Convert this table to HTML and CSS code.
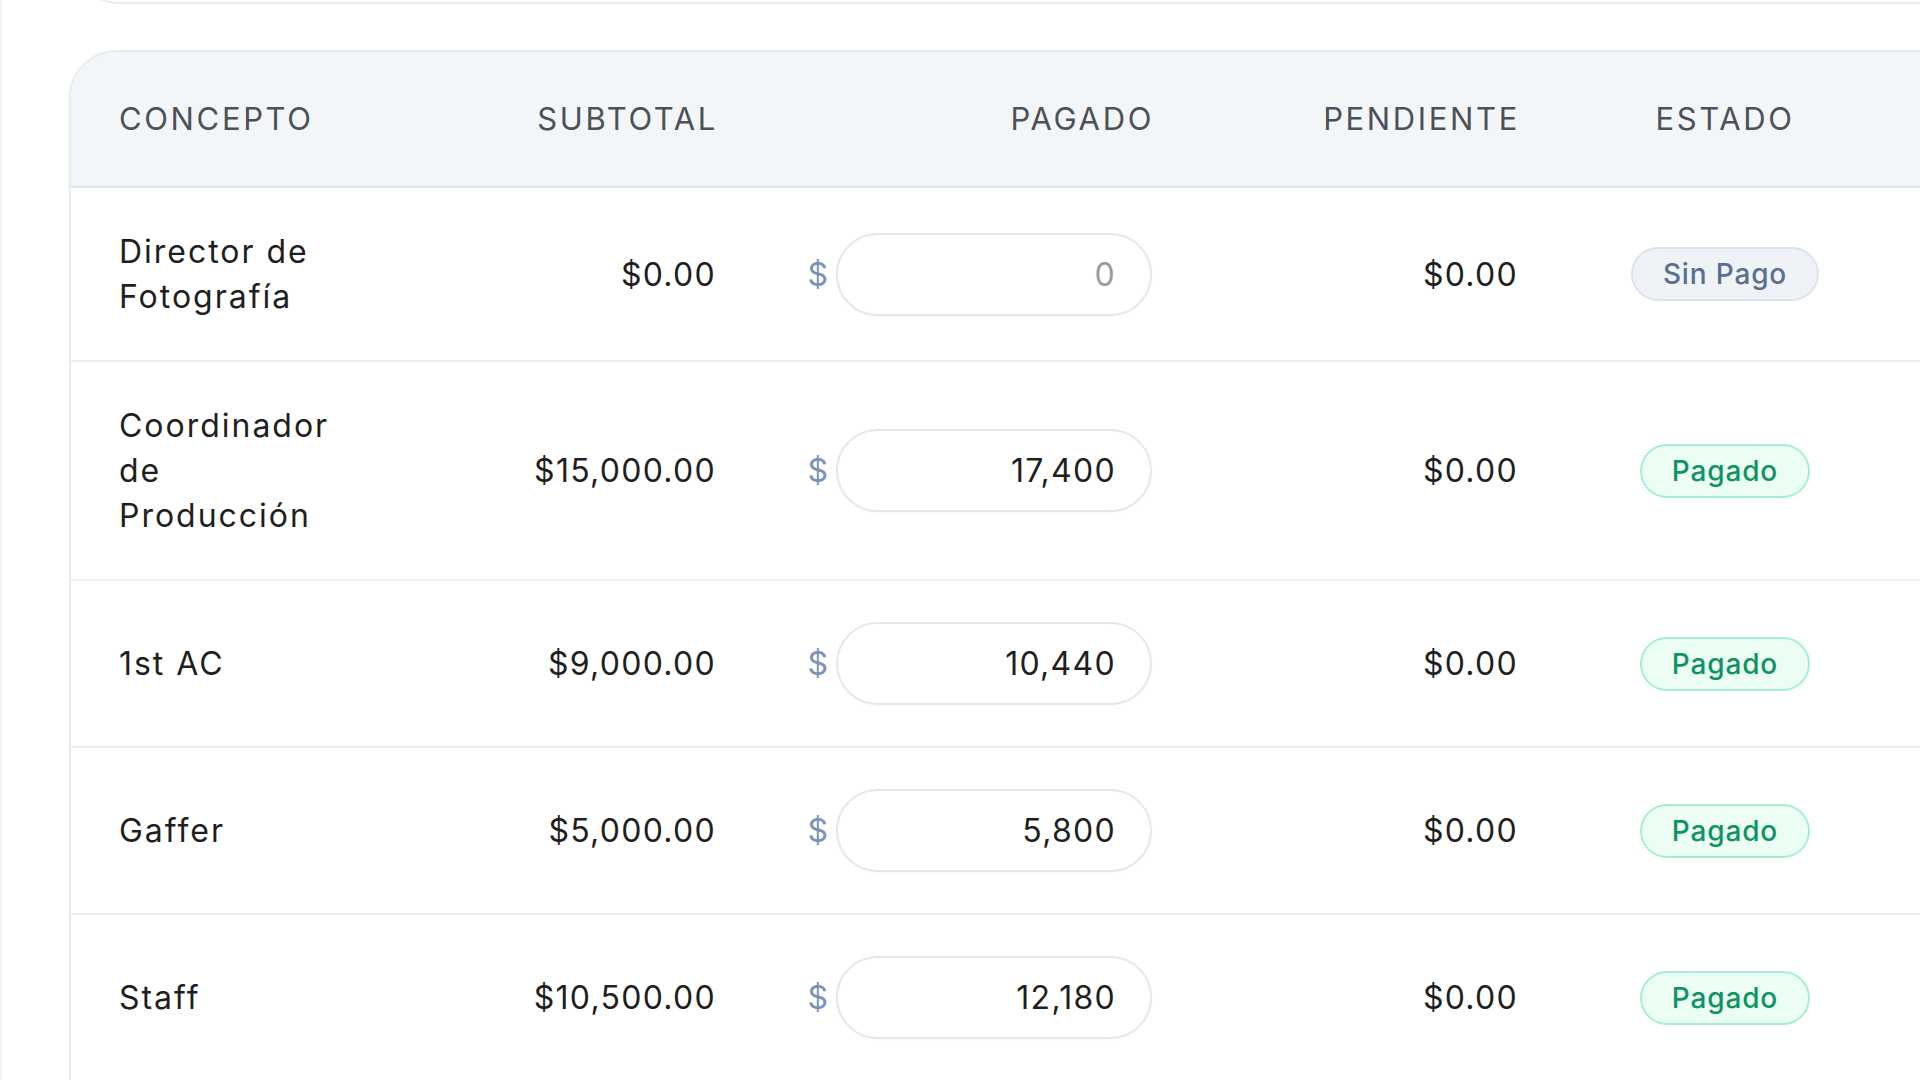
FILE: index.html
```html
<!DOCTYPE html>
<html lang="es">
<head>
<meta charset="utf-8">
<title>Pagos</title>
<link rel="stylesheet" href="styles.css">
</head>
<body>
<div class="page">
  <div class="prev-card"></div>
  <div class="table-card">
    <table class="pay-table">
      <colgroup>
        <col class="c-concept">
        <col class="c-subtotal">
        <col class="c-paid">
        <col class="c-pending">
        <col class="c-status">
        <col class="c-extra">
      </colgroup>
      <thead>
        <tr>
          <th class="left">Concepto</th>
          <th class="right">Subtotal</th>
          <th class="right">Pagado</th>
          <th class="right">Pendiente</th>
          <th class="center">Estado</th>
          <th></th>
        </tr>
      </thead>
      <tbody>
        <tr>
          <td class="left concept">Director de Fotografía</td>
          <td class="right num">$0.00</td>
          <td class="right"><div class="paid"><span class="cur">$</span><input class="amount zero" type="text" value="0"></div></td>
          <td class="right num">$0.00</td>
          <td class="center"><span class="badge badge-none">Sin Pago</span></td>
          <td></td>
        </tr>
        <tr>
          <td class="left concept">Coordinador de Producción</td>
          <td class="right num">$15,000.00</td>
          <td class="right"><div class="paid"><span class="cur">$</span><input class="amount" type="text" value="17,400"></div></td>
          <td class="right num">$0.00</td>
          <td class="center"><span class="badge badge-paid">Pagado</span></td>
          <td></td>
        </tr>
        <tr>
          <td class="left concept">1st AC</td>
          <td class="right num">$9,000.00</td>
          <td class="right"><div class="paid"><span class="cur">$</span><input class="amount" type="text" value="10,440"></div></td>
          <td class="right num">$0.00</td>
          <td class="center"><span class="badge badge-paid">Pagado</span></td>
          <td></td>
        </tr>
        <tr>
          <td class="left concept">Gaffer</td>
          <td class="right num">$5,000.00</td>
          <td class="right"><div class="paid"><span class="cur">$</span><input class="amount" type="text" value="5,800"></div></td>
          <td class="right num">$0.00</td>
          <td class="center"><span class="badge badge-paid">Pagado</span></td>
          <td></td>
        </tr>
        <tr>
          <td class="left concept">Staff</td>
          <td class="right num">$10,500.00</td>
          <td class="right"><div class="paid"><span class="cur">$</span><input class="amount" type="text" value="12,180"></div></td>
          <td class="right num">$0.00</td>
          <td class="center"><span class="badge badge-paid">Pagado</span></td>
          <td></td>
        </tr>
      </tbody>
    </table>
  </div>
</div>
</body>
</html>
```
FILE: styles.css
```css
html, body {
  margin: 0;
  padding: 0;
  background: #ffffff;
  overflow: hidden;
}
body {
  font-family: "Inter", "Noto Sans", "Liberation Sans", sans-serif;
  color: #1f1f21;
  width: 1920px;
  height: 1080px;
  border-left: 2px solid #f0f2f5;
  box-sizing: border-box;
}
.page {
  padding-left: 67px;
  width: 2200px;
}
.prev-card {
  height: 200px;
  margin-top: -198px;
  border: 2px solid #e8ecf2;
  border-top: none;
  border-radius: 0 0 48px 48px;
  background: #fff;
  margin-left: 2px;
}
.table-card {
  margin-top: 46px;
  border: 2px solid #e6ebf1;
  border-radius: 48px 48px 0 0;
  overflow: hidden;
  background: #fff;
}
.pay-table {
  border-collapse: collapse;
  table-layout: fixed;
  width: 2000px;
}
.c-concept { width: 319px; }
.c-subtotal { width: 374px; }
.c-paid { width: 436px; }
.c-pending { width: 366px; }
.c-status { width: 318px; }
.c-extra { width: 187px; }

.pay-table th {
  background: #f3f6f9;
  font-weight: 400;
  font-size: 31px;
  letter-spacing: 0.085em;
  text-transform: uppercase;
  color: #4c5057;
  line-height: 44px;
  padding: 45px 48px;
  border-bottom: 2px solid #e1e5ea;
  white-space: nowrap;
}
.pay-table th.right { padding-right: 46px; }
.pay-table td {
  font-size: 32px;
  line-height: 45px;
  padding: 41px 48px;
  border-bottom: 2px solid #eceef1;
  vertical-align: middle;
  font-weight: 400;
}
.left { text-align: left; }
.right { text-align: right; }
.center { text-align: center; }
.pay-table td.concept {
  padding-right: 46px;
  letter-spacing: 0.062em;
}
.pay-table td.num { letter-spacing: 0.04em; }

.paid {
  display: flex;
  align-items: center;
  justify-content: flex-end;
  gap: 8px;
}
.cur {
  color: #7b93b6;
  font-size: 32px;
}
.amount {
  width: 316px;
  height: 83px;
  box-sizing: border-box;
  border: 2px solid #e7e7e7;
  border-radius: 999px;
  padding: 0 34px;
  font-family: inherit;
  font-size: 32px;
  letter-spacing: 0.04em;
  color: #1f1f21;
  text-align: right;
  background: #fff;
  box-shadow: 0 1px 2px rgba(0, 0, 0, 0.03);
  outline: none;
}
.amount.zero { color: #9b9b9b; }

.badge {
  display: inline-block;
  font-size: 28px;
  line-height: 34px;
  letter-spacing: 0.03em;
  padding: 8px 30px;
  border-radius: 999px;
  border: 2px solid transparent;
  font-weight: 500;
  vertical-align: middle;
}
.badge-none {
  background: #eff3f8;
  border-color: #dbe3ee;
  color: #5a6f8f;
}
.badge-paid {
  background: #ecfdf4;
  border-color: #a6efcd;
  color: #0d9460;
}
```
